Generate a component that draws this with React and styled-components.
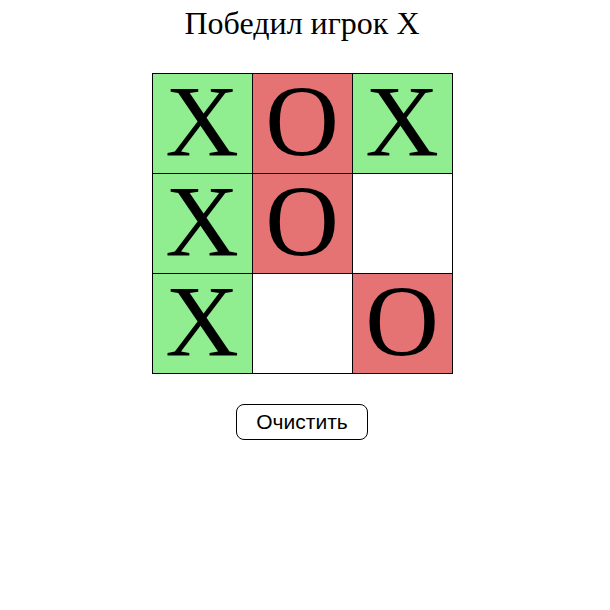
import styled, { createGlobalStyle } from "styled-components";

const GlobalStyle = createGlobalStyle`
  body {
    margin: 0;
    background: #fff;
  }
`;

const board = ["X", "O", "X", "X", "O", "", "X", "", "O"];

const cellColors = {
  X: "#90ee90",
  O: "#e57373",
  "": "#ffffff",
};

export default function App() {
  return (
    <>
      <GlobalStyle />
      <Page>
        <Title>Победил игрок X</Title>
        <Board>
          {board.map((value, i) => (
            <Cell key={i} $value={value}>
              {value}
            </Cell>
          ))}
        </Board>
        <ClearButton type="button">Очистить</ClearButton>
      </Page>
    </>
  );
}

const Page = styled.div`
  width: 604px;
  display: flex;
  flex-direction: column;
  align-items: center;
  padding-top: 4px;
`;

const Title = styled.h1`
  margin: 0;
  font-family: "Liberation Serif", "Times New Roman", serif;
  font-size: 32px;
  font-weight: 400;
  line-height: 38px;
  color: #000;
`;

const Board = styled.div`
  margin-top: 31px;
  display: grid;
  grid-template-columns: repeat(3, 99px);
  grid-auto-rows: 99px;
  gap: 1px;
  padding: 1px;
  background: #000;
`;

const Cell = styled.div`
  display: flex;
  align-items: center;
  justify-content: center;
  background: ${({ $value }) => cellColors[$value]};
  font-family: "Liberation Serif", "Times New Roman", serif;
  font-size: 102px;
  line-height: 94px;
  color: #000;
  padding-bottom: 4px;
  box-sizing: border-box;
`;

const ClearButton = styled.button`
  margin-top: 30px;
  width: 132px;
  height: 36px;
  border: 1px solid #000;
  border-radius: 8px;
  background: #fff;
  font-family: "Liberation Sans", Arial, sans-serif;
  font-size: 21px;
  color: #000;
  padding: 0;
  cursor: pointer;
`;
